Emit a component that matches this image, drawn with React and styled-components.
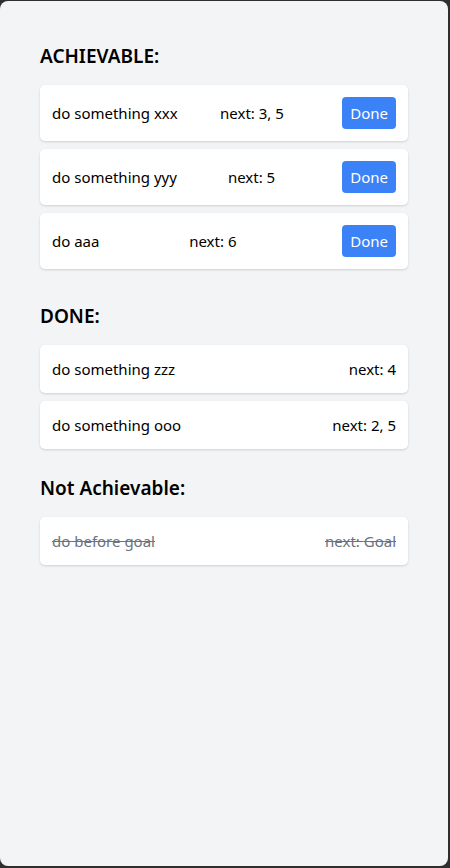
import React from "react";
import styled, { createGlobalStyle } from "styled-components";

const GlobalStyle = createGlobalStyle`
  html, body {
    margin: 0;
    padding: 0;
    background: #2e2e2e;
  }
  body {
    padding-top: 1px;
    font-family: "Noto Sans", "Open Sans", sans-serif;
  }
`;

const Panel = styled.div`
  width: 448px;
  height: 865px;
  box-sizing: border-box;
  background: #f3f4f6;
  border-radius: 8px;
  padding: 41px 40px 0 40px;
  color: #000;
`;

const Section = styled.section`
  margin-bottom: ${(p) => p.$after || 25}px;
`;

const Heading = styled.h2`
  margin: 0 0 15px 0;
  font-size: 19px;
  line-height: 28px;
  font-weight: 600;
`;

const List = styled.div`
  display: flex;
  flex-direction: column;
  gap: 8px;
`;

const Card = styled.div`
  display: flex;
  align-items: center;
  justify-content: space-between;
  background: #fff;
  border-radius: 5px;
  box-shadow: 0 1px 3px rgba(0, 0, 0, 0.1), 0 1px 2px rgba(0, 0, 0, 0.06);
  padding: 12px;
  font-size: 15px;
  line-height: 24px;
  color: ${(p) => (p.$struck ? "#6b7280" : "#000")};
  text-decoration: ${(p) => (p.$struck ? "line-through" : "none")};
`;

const Label = styled.span``;

const DoneButton = styled.button`
  margin-left: 16px;
  border: none;
  background: #3b82f6;
  color: #fff;
  font-family: inherit;
  font-size: 15px;
  line-height: 24px;
  padding: 4px 8px;
  border-radius: 4px;
  cursor: pointer;
`;

const achievable = [
  { title: "do something xxx", next: "3, 5" },
  { title: "do something yyy", next: "5" },
  { title: "do aaa", next: "6" },
];

const done = [
  { title: "do something zzz", next: "4" },
  { title: "do something ooo", next: "2, 5" },
];

const blocked = [{ title: "do before goal", next: "Goal" }];

export default function App() {
  return (
    <>
      <GlobalStyle />
      <Panel>
        <Section $after={33}>
          <Heading>ACHIEVABLE:</Heading>
          <List>
            {achievable.map((t) => (
              <Card key={t.title}>
                <Label>{t.title}</Label>
                <Label>next: {t.next}</Label>
                <DoneButton>Done</DoneButton>
              </Card>
            ))}
          </List>
        </Section>
        <Section>
          <Heading>DONE:</Heading>
          <List>
            {done.map((t) => (
              <Card key={t.title}>
                <Label>{t.title}</Label>
                <Label>next: {t.next}</Label>
              </Card>
            ))}
          </List>
        </Section>
        <Section>
          <Heading>Not Achievable:</Heading>
          <List>
            {blocked.map((t) => (
              <Card key={t.title} $struck>
                <Label>{t.title}</Label>
                <Label>next: {t.next}</Label>
              </Card>
            ))}
          </List>
        </Section>
      </Panel>
    </>
  );
}
